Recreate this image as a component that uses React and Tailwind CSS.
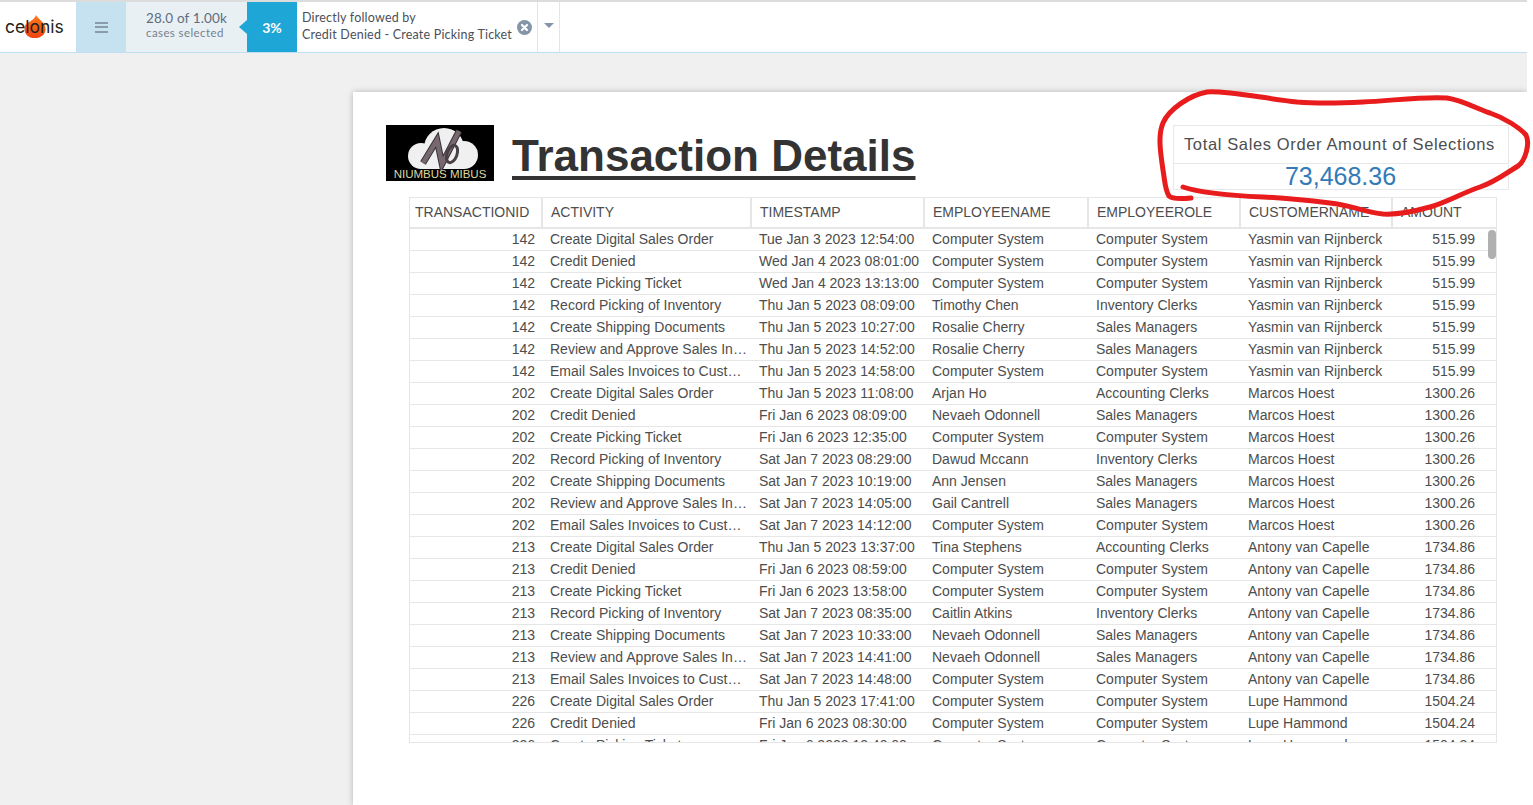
const groups = [
  ["142", "Yasmin van Rijnberck", "515.99", [
    ["Create Digital Sales Order", "Tue Jan 3 2023 12:54:00", "Computer System", "Computer System"],
    ["Credit Denied", "Wed Jan 4 2023 08:01:00", "Computer System", "Computer System"],
    ["Create Picking Ticket", "Wed Jan 4 2023 13:13:00", "Computer System", "Computer System"],
    ["Record Picking of Inventory", "Thu Jan 5 2023 08:09:00", "Timothy Chen", "Inventory Clerks"],
    ["Create Shipping Documents", "Thu Jan 5 2023 10:27:00", "Rosalie Cherry", "Sales Managers"],
    ["Review and Approve Sales Invoices", "Thu Jan 5 2023 14:52:00", "Rosalie Cherry", "Sales Managers"],
    ["Email Sales Invoices to Customers", "Thu Jan 5 2023 14:58:00", "Computer System", "Computer System"],
  ]],
  ["202", "Marcos Hoest", "1300.26", [
    ["Create Digital Sales Order", "Thu Jan 5 2023 11:08:00", "Arjan Ho", "Accounting Clerks"],
    ["Credit Denied", "Fri Jan 6 2023 08:09:00", "Nevaeh Odonnell", "Sales Managers"],
    ["Create Picking Ticket", "Fri Jan 6 2023 12:35:00", "Computer System", "Computer System"],
    ["Record Picking of Inventory", "Sat Jan 7 2023 08:29:00", "Dawud Mccann", "Inventory Clerks"],
    ["Create Shipping Documents", "Sat Jan 7 2023 10:19:00", "Ann Jensen", "Sales Managers"],
    ["Review and Approve Sales Invoices", "Sat Jan 7 2023 14:05:00", "Gail Cantrell", "Sales Managers"],
    ["Email Sales Invoices to Customers", "Sat Jan 7 2023 14:12:00", "Computer System", "Computer System"],
  ]],
  ["213", "Antony van Capelle", "1734.86", [
    ["Create Digital Sales Order", "Thu Jan 5 2023 13:37:00", "Tina Stephens", "Accounting Clerks"],
    ["Credit Denied", "Fri Jan 6 2023 08:59:00", "Computer System", "Computer System"],
    ["Create Picking Ticket", "Fri Jan 6 2023 13:58:00", "Computer System", "Computer System"],
    ["Record Picking of Inventory", "Sat Jan 7 2023 08:35:00", "Caitlin Atkins", "Inventory Clerks"],
    ["Create Shipping Documents", "Sat Jan 7 2023 10:33:00", "Nevaeh Odonnell", "Sales Managers"],
    ["Review and Approve Sales Invoices", "Sat Jan 7 2023 14:41:00", "Nevaeh Odonnell", "Sales Managers"],
    ["Email Sales Invoices to Customers", "Sat Jan 7 2023 14:48:00", "Computer System", "Computer System"],
  ]],
  ["226", "Lupe Hammond", "1504.24", [
    ["Create Digital Sales Order", "Thu Jan 5 2023 17:41:00", "Computer System", "Computer System"],
    ["Credit Denied", "Fri Jan 6 2023 08:30:00", "Computer System", "Computer System"],
    ["Create Picking Ticket", "Fri Jan 6 2023 13:40:00", "Computer System", "Computer System"],
  ]],
];
const rows = groups.flatMap(([id, customer, amount, list]) =>
  list.map(([activity, time, employee, role]) => ({ id, activity, time, employee, role, customer, amount }))
);
const cols = "grid grid-cols-[132px_209px_173px_164px_152px_152px_104px]";
const headCols = "grid grid-cols-[133px_209px_173px_164px_152px_152px_103px]";
const headers = ["TRANSACTIONID", "ACTIVITY", "TIMESTAMP", "EMPLOYEENAME", "EMPLOYEEROLE", "CUSTOMERNAME", "AMOUNT"];

function TopBar() {
  return (
    <div className="flex h-[53px] shrink-0 border-t-2 border-b border-t-[#dcdcdc] border-b-[#bfe0ef] bg-white font-['Lato',sans-serif]">
      <div className="relative flex w-[76px] items-center pl-[5px]">
        <svg className="absolute left-[23px] top-[12px]" width="24" height="25" viewBox="0 0 24 26">
          <defs>
            <linearGradient id="flame" x1="0" y1="0" x2="0" y2="1">
              <stop offset="0" stopColor="#ff7a1a" />
              <stop offset="1" stopColor="#f0420f" />
            </linearGradient>
          </defs>
          <path d="M13 1 C15 5 22 8 23 15 C23.500 21 18 25 12 25 C5 25 1 21 1 15 C1 10 5 9 8 7 C10 6 12 4 13 1Z" fill="url(#flame)" />
        </svg>
        <span className="relative font-['Inter',sans-serif] text-[17.500px] leading-none text-[#222]">celonis</span>
      </div>
      <div className="flex w-[50px] items-center justify-center bg-[#c6e2f0]">
        <div className="flex w-[13px] flex-col gap-[2.500px]">
          <div className="h-[2px] bg-[#8a9bab]" />
          <div className="h-[2px] bg-[#8a9bab]" />
          <div className="h-[2px] bg-[#8a9bab]" />
        </div>
      </div>
      <div className="flex w-[121px] flex-col items-start bg-[#e8f0f4] pl-[20px] pt-[9px]">
        <span className="text-[13.500px] leading-[15px] tracking-[0.15px] text-[#5f6d80]">28.0 of 1.00k</span>
        <span className="text-[11.500px] leading-[13px] tracking-[0.4px] text-[#76818f]">cases selected</span>
      </div>
      <div className="relative flex w-[50px] items-center justify-center bg-[#1ea7d6] text-[14px] font-bold text-white">
        <div className="absolute left-[-8px] top-[18px] h-0 w-0 border-y-[7px] border-r-[8px] border-y-transparent border-r-[#1ea7d6]" />
        3%
      </div>
      <div className="relative flex w-[240px] flex-col pl-[5px] pt-[7px] text-[12.500px] leading-[17px] tracking-[0.2px] text-[#4b5058]">
        <span>Directly followed by</span>
        <span>Credit Denied - Create Picking Ticket</span>
        <svg className="absolute left-[220px] top-[18px]" width="15" height="15" viewBox="0 0 15 15">
          <circle cx="7.500" cy="7.500" r="7.500" fill="#8595a8" />
          <path d="M5 5 L10 10 M10 5 L5 10" stroke="#fff" strokeWidth="2.200" strokeLinecap="round" />
        </svg>
      </div>
      <div className="flex w-[23px] justify-center border-x border-[#dfe7ec] pt-[21px]">
        <div className="h-0 w-0 border-x-[5px] border-t-[5px] border-x-transparent border-t-[#8595a8]" />
      </div>
    </div>
  );
}

function Logo() {
  return (
    <div className="relative h-[56px] w-[108px] shrink-0 bg-black">
      <svg className="absolute left-0 top-0" width="108" height="56" viewBox="0 0 108 56">
        <g fill="#f0f0f0">
          <circle cx="35" cy="31" r="13" />
          <circle cx="58" cy="23" r="20" />
          <circle cx="78" cy="30" r="14" />
          <rect x="35" y="28" width="43" height="16" />
        </g>
        <path d="M37 38 L51 15 L56 39 L73 6" fill="none" stroke="#3a3237" strokeWidth="6.500" />
        <path d="M37 38 L51 15 L56 39 L73 6" fill="none" stroke="#75696f" strokeWidth="4.500" />
        <ellipse cx="66" cy="29" rx="5" ry="9" transform="rotate(20 66 29)" fill="none" stroke="#4a4045" strokeWidth="3" />
      </svg>
      <span className="absolute inset-x-0 bottom-0 text-center font-['Liberation_Sans',sans-serif] text-[11.500px] leading-[14px] text-[#ddd9a0]">NIUMBUS MIBUS</span>
    </div>
  );
}

function Kpi() {
  return (
    <div className="ml-auto flex h-[65px] w-[336px] shrink-0 flex-col border border-[#e8e8e8]">
      <div className="flex h-[39px] items-center justify-center border-b border-[#e8e8e8] pr-[3px] text-[16.500px] tracking-[0.63px] text-[#4d4d4d]">
        Total Sales Order Amount of Selections
      </div>
      <div className="flex flex-1 items-center justify-center pr-[1px] text-[25px] leading-none text-[#337ab7]">73,468.36</div>
    </div>
  );
}

function DataTable() {
  return (
    <div className="relative ml-[23px] mt-[7px] flex h-[546px] w-[1088px] flex-col overflow-hidden border border-[#e6e6e6] text-[14px] text-[#4d4d4d]">
      <div className={`${headCols} h-[31px] shrink-0 border-b-2 border-[#e6e6e6]`}>
        {headers.map((h, i) => (
          <div key={h} className={`flex items-center ${i === 0 ? "pl-[5px]" : "pl-[8px]"} ${i < 6 ? "border-r-2 border-[#e6e6e6]" : ""}`}>
            {h}
          </div>
        ))}
      </div>
      <div className="flex-1 overflow-hidden">
        {rows.map((r, i) => (
          <div key={i} className={`${cols} h-[22px] border-b border-[#e6e6e6] leading-[21px]`}>
            <div className="pr-[7px] text-right">{r.id}</div>
            <div className="truncate pl-[8px] pr-[4px]">{r.activity}</div>
            <div className="pl-[8px]">{r.time}</div>
            <div className="pl-[8px]">{r.employee}</div>
            <div className="pl-[8px]">{r.role}</div>
            <div className="pl-[8px]">{r.customer}</div>
            <div className="pr-[21px] text-right">{r.amount}</div>
          </div>
        ))}
      </div>
      <div className="absolute right-0 top-[32px] h-[29px] w-[8px] rounded-[4px] bg-[#b0b0b0]" />
    </div>
  );
}

function Scribble() {
  return (
    <svg className="pointer-events-none absolute left-0 top-0" width="1533" height="805" viewBox="0 0 1533 805">
      <path
        d="M1191 198 C1180 199 1172 199 1169 196 C1165 190 1165 182 1163 170 C1160 150 1158 135 1163 123 C1169 109 1190 95 1207 92 C1222 90 1262 98 1297 102 C1320 104 1345 103 1363 102 C1390 101 1425 96 1447 98 C1462 100 1480 110 1490 113 C1505 118 1520 128 1526 135 C1530 143 1526 160 1518 166 C1505 174 1495 182 1480 187 C1460 194 1445 203 1430 207 C1412 212 1398 215 1383 214 C1365 212 1350 205 1330 203 C1305 200 1285 198 1263 197 C1240 196 1200 193 1183 187"
        fill="none"
        stroke="#e81c1c"
        strokeWidth="5"
        strokeLinecap="round"
        strokeLinejoin="round"
      />
    </svg>
  );
}

export default function App() {
  return (
    <div className="relative h-[805px] w-full overflow-hidden bg-white font-['Liberation_Sans',sans-serif]">
      <div className="flex h-full w-[1527px] flex-col overflow-hidden bg-[#f0f0f0]">
        <TopBar />
        <div className="ml-[353px] mt-[39px] flex-1 bg-white pl-[33px] pr-[18px] pt-[33px] shadow-[0_0_6px_rgba(0,0,0,0.25)]">
          <div className="flex items-start">
            <Logo />
            <h1 className="ml-[18px] text-[44px] font-bold leading-[62px] text-[#333] underline decoration-[4px] underline-offset-[5px]">
              Transaction Details
            </h1>
            <Kpi />
          </div>
          <DataTable />
        </div>
      </div>
      <Scribble />
    </div>
  );
}
